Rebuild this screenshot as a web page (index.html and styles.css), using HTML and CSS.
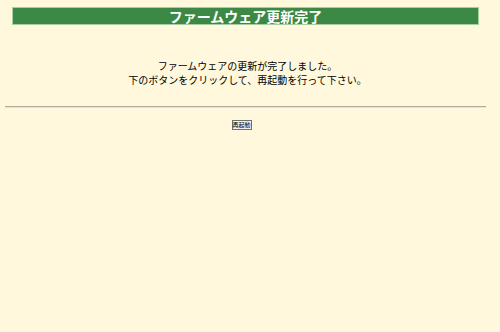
FILE: index.html
```html
<!DOCTYPE html>
<html lang="ja">

<head>
    <meta charset="UTF-8">
    <title>ファームウェア更新完了</title>
    <link rel="stylesheet" href="styles.css">
</head>

<body>
    <div class="title">ファームウェア更新完了</div>
    <div class="message">
        <div>ファームウェアの更新が完了しました。</div>
        <div>下のボタンをクリックして、再起動を行って下さい。</div>
    </div>
    <hr class="line">
    <div class="actions">
        <button type="button" class="reboot">再起動</button>
    </div>
</body>

</html>
```

FILE: styles.css
```css
body {
    margin: 7px 14px 0 5px;
    background-color: #fff8dc;
    font-family: "Noto Sans CJK JP", sans-serif;
    color: #000;
}

.title {
    margin: 0 7px;
    height: 16px;
    line-height: 16px;
    border: 1px solid #a8cfa0;
    background-color: #3c8945;
    color: #fff;
    font-size: 14px;
    font-weight: bold;
    text-align: center;
}

.message {
    margin-top: 34px;
    padding-left: 4px;
    font-size: 10px;
    line-height: 14px;
    text-align: center;
}

.line {
    margin: 19px 0 0;
    border: none;
    border-top: 1px solid #b0aca0;
    border-bottom: 1px solid #e8e4d4;
}

.actions {
    margin-top: 12px;
    font-size: 0;
    line-height: 0;
    text-align: center;
}

.reboot {
    margin-left: -8px;
    width: 20px;
    height: 10px;
    padding: 0;
    font-family: "Noto Sans CJK JP", sans-serif;
    font-size: 6px;
    line-height: 8px;
    border: 1px solid #707070;
    background-color: #eef0f4;
    color: #000;
}
```
